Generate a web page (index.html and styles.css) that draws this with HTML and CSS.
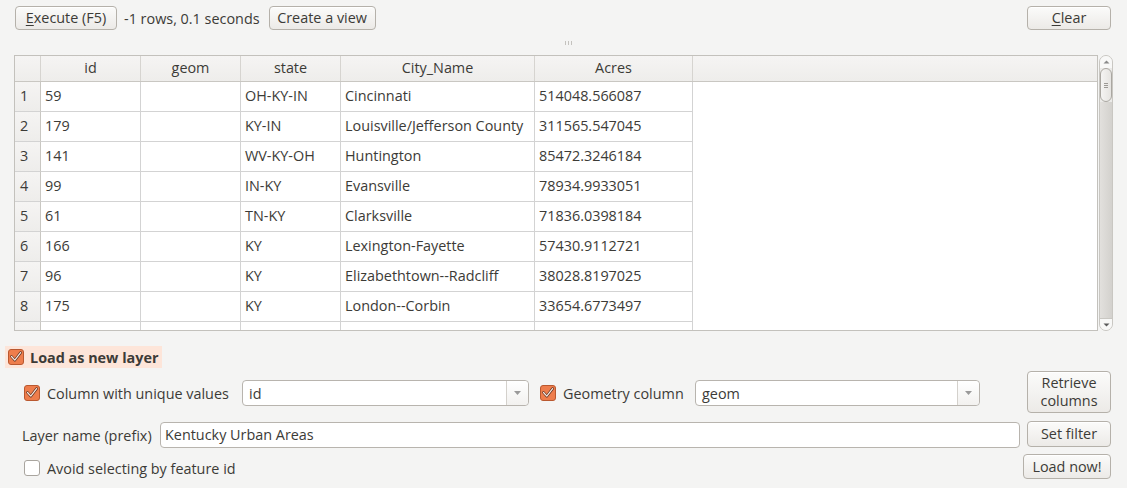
FILE: index.html
```html
<!DOCTYPE html>
<html>
<head>
<meta charset="utf-8">
<link rel="stylesheet" href="styles.css">
</head>
<body>
<div class="app">
  <div class="topbar">
    <button class="btn btn-exec"><u>E</u>xecute (F5)</button>
    <span class="status">-1 rows, 0.1 seconds</span>
    <button class="btn btn-view">Create a view</button>
    <span class="spacer"></span>
    <button class="btn btn-clear"><u>C</u>lear</button>
  </div>
  <div class="splitter"><span class="grip"></span><span class="grip"></span><span class="grip"></span></div>
  <div class="tablerow">
    <div class="tablebox">
      <div class="thead">
        <div class="c rn"></div>
        <div class="c w100">id</div>
        <div class="c w100">geom</div>
        <div class="c w100">state</div>
        <div class="c w194">City_Name</div>
        <div class="c w158">Acres</div>
        <div class="fill"></div>
      </div>
      <div class="tbody">
        <div class="tr"><div class="c rn">1</div><div class="c w100">59</div><div class="c w100"></div><div class="c w100">OH-KY-IN</div><div class="c w194">Cincinnati</div><div class="c w158">514048.566087</div></div>
        <div class="tr"><div class="c rn">2</div><div class="c w100">179</div><div class="c w100"></div><div class="c w100">KY-IN</div><div class="c w194">Louisville/Jefferson County</div><div class="c w158">311565.547045</div></div>
        <div class="tr"><div class="c rn">3</div><div class="c w100">141</div><div class="c w100"></div><div class="c w100">WV-KY-OH</div><div class="c w194">Huntington</div><div class="c w158">85472.3246184</div></div>
        <div class="tr"><div class="c rn">4</div><div class="c w100">99</div><div class="c w100"></div><div class="c w100">IN-KY</div><div class="c w194">Evansville</div><div class="c w158">78934.9933051</div></div>
        <div class="tr"><div class="c rn">5</div><div class="c w100">61</div><div class="c w100"></div><div class="c w100">TN-KY</div><div class="c w194">Clarksville</div><div class="c w158">71836.0398184</div></div>
        <div class="tr"><div class="c rn">6</div><div class="c w100">166</div><div class="c w100"></div><div class="c w100">KY</div><div class="c w194">Lexington-Fayette</div><div class="c w158">57430.9112721</div></div>
        <div class="tr"><div class="c rn">7</div><div class="c w100">96</div><div class="c w100"></div><div class="c w100">KY</div><div class="c w194">Elizabethtown--Radcliff</div><div class="c w158">38028.8197025</div></div>
        <div class="tr"><div class="c rn">8</div><div class="c w100">175</div><div class="c w100"></div><div class="c w100">KY</div><div class="c w194">London--Corbin</div><div class="c w158">33654.6773497</div></div>
        <div class="tr last"><div class="c rn"></div><div class="c w100"></div><div class="c w100"></div><div class="c w100"></div><div class="c w194"><span class="peek">Bowling Green</span></div><div class="c w158"></div></div>
      </div>
    </div>
    <div class="vscroll">
      <div class="arrow up"><svg width="7" height="4" viewBox="0 0 7 4"><path d="M0.5 3.5 L3.5 0.5 L6.5 3.5 Z" fill="#8a8a8a"/></svg></div>
      <div class="thumb"><span></span><span></span><span></span></div>
      <div class="track"></div>
      <div class="arrow down"><svg width="7" height="4" viewBox="0 0 7 4"><path d="M0.5 0.5 L6.5 0.5 L3.5 3.5 Z" fill="#5a5a5a"/></svg></div>
    </div>
  </div>

  <div class="group-head">
    <span class="chk on"><svg width="16" height="16" viewBox="0 0 16 16"><rect x="0.5" y="0.5" width="15" height="15" rx="2.5" fill="#ee7d4c" stroke="#b9582f"/><path d="M3.5 7.5 L6.8 11.2 L12.6 3.6" fill="none" stroke="#5b3222" stroke-width="2.6" stroke-linecap="round" stroke-linejoin="round"/><path d="M3.5 7.5 L6.8 11.2 L12.6 3.6" fill="none" stroke="#fbe9e1" stroke-width="1.2" stroke-linecap="round" stroke-linejoin="round"/></svg></span>
    <span class="group-title">Load as new layer</span>
  </div>

  <div class="opts">
    <div class="opts-main">
      <div class="row r1">
        <span class="chk on"><svg width="16" height="16" viewBox="0 0 16 16"><rect x="0.5" y="0.5" width="15" height="15" rx="2.5" fill="#ee7d4c" stroke="#b9582f"/><path d="M3.5 7.5 L6.8 11.2 L12.6 3.6" fill="none" stroke="#5b3222" stroke-width="2.6" stroke-linecap="round" stroke-linejoin="round"/><path d="M3.5 7.5 L6.8 11.2 L12.6 3.6" fill="none" stroke="#fbe9e1" stroke-width="1.2" stroke-linecap="round" stroke-linejoin="round"/></svg></span>
        <span class="lbl lbl-unique">Column with unique values</span>
        <div class="combo combo-id"><span class="val">id</span><span class="drop"><svg width="7" height="4" viewBox="0 0 7 4"><path d="M0 0 L7 0 L3.5 4 Z" fill="#9a9a9a"/></svg></span></div>
        <span class="chk on chk-geom"><svg width="16" height="16" viewBox="0 0 16 16"><rect x="0.5" y="0.5" width="15" height="15" rx="2.5" fill="#ee7d4c" stroke="#b9582f"/><path d="M3.5 7.5 L6.8 11.2 L12.6 3.6" fill="none" stroke="#5b3222" stroke-width="2.6" stroke-linecap="round" stroke-linejoin="round"/><path d="M3.5 7.5 L6.8 11.2 L12.6 3.6" fill="none" stroke="#fbe9e1" stroke-width="1.2" stroke-linecap="round" stroke-linejoin="round"/></svg></span>
        <span class="lbl lbl-geom">Geometry column</span>
        <div class="combo combo-geom"><span class="val">geom</span><span class="drop"><svg width="7" height="4" viewBox="0 0 7 4"><path d="M0 0 L7 0 L3.5 4 Z" fill="#9a9a9a"/></svg></span></div>
      </div>
      <div class="row r2">
        <span class="lbl lbl-name">Layer name (prefix)</span>
        <div class="input">Kentucky Urban Areas</div>
      </div>
      <div class="row r3">
        <span class="chk off"><svg width="16" height="16" viewBox="0 0 16 16"><rect x="0.5" y="0.5" width="15" height="15" rx="2.5" fill="#ffffff" stroke="#a9a59f"/></svg></span>
        <span class="lbl">Avoid selecting by feature id</span>
      </div>
    </div>
    <div class="opts-side">
      <button class="btn btn-retrieve">Retrieve<br>columns</button>
      <button class="btn btn-filter">Set filter</button>
      <button class="btn btn-load">Load now!</button>
    </div>
  </div>
</div>
</body>
</html>
```

FILE: styles.css
```css
* { box-sizing: border-box; }
html, body { margin: 0; padding: 0; }
body {
  width: 1127px;
  height: 488px;
  overflow: hidden;
  background: #f4f4f3;
  font-family: "Open Sans", "Noto Sans", "DejaVu Sans", sans-serif;
  font-size: 14.4px;
  color: #3c3b37;
}
.app { width: 1127px; }

.btn {
  font-family: inherit;
  font-size: 14.4px;
  color: #3c3b37;
  background: linear-gradient(#fbfbfa, #eceae7);
  border: 1px solid #b5b1aa;
  border-radius: 4px;
  padding: 0;
  height: 24px;
  line-height: 20px;
  box-shadow: inset 0 1px 0 #ffffff;
  white-space: nowrap;
}
.btn u { text-decoration: underline; text-underline-offset: 2px; }

.topbar {
  display: flex;
  align-items: center;
  padding: 6px 16px 0 15px;
  height: 30px;
}
.btn-exec { width: 102px; }
.status { margin-left: 7px; margin-right: 9px; white-space: nowrap; }
.btn-view { width: 107px; }
.spacer { flex: 1; }
.btn-clear { width: 84px; }

.splitter {
  height: 25px;
  display: flex;
  justify-content: center;
  align-items: center;
  gap: 1px;
  padding-left: 10px;
}
.grip { width: 1px; height: 4px; background: #c4c2be; margin: 0 0.5px; }

.tablerow {
  display: flex;
  padding-left: 14px;
  height: 276px;
}
.tablebox {
  width: 1084px;
  height: 276px;
  border: 1px solid #c3c1bc;
  background: #ffffff;
  overflow: hidden;
}
.thead {
  display: flex;
  height: 26px;
  background: linear-gradient(#f5f4f3, #eeedeb);
  border-bottom: 1px solid #c9c7c2;
}
.thead .c {
  text-align: center;
  line-height: 24px;
  border-right: 1px solid #d6d4d0;
}
.thead .fill { flex: 1; }
.tr { display: flex; height: 30px; }
.c {
  flex: none;
  height: 100%;
  border-right: 1px solid #d3d3d3;
  border-bottom: 1px solid #d3d3d3;
  padding-left: 4px;
  line-height: 28px;
  white-space: nowrap;
  overflow: hidden;
}
.thead .c { border-bottom: none; padding-left: 0; }
.rn { width: 26px; background: linear-gradient(#f5f4f3, #eeedeb); }
.tbody .rn { padding-left: 5px; border-right-color: #c9c7c2; }
.w100 { width: 100px; }
.w194 { width: 194px; }
.w158 { width: 158px; }
.peek { display: inline-block; color: #3c3b37; }

.vscroll {
  margin-left: 1px;
  width: 14px;
  height: 276px;
  border: 1px solid #c9c7c2;
  border-radius: 7px;
  background: #ebeae8;
  display: flex;
  flex-direction: column;
  align-items: center;
  overflow: hidden;
}
.arrow {
  height: 12px;
  width: 100%;
  display: flex;
  align-items: center;
  justify-content: center;
  background: #f8f8f7;
}
.arrow.down { border-top: 1px solid #c9c7c2; margin-top: auto; }
.thumb {
  width: 12px;
  height: 34px;
  border: 1px solid #aaa7a1;
  border-radius: 6px;
  background: linear-gradient(90deg, #f5f4f3, #e6e4e1);
  display: flex;
  flex-direction: column;
  align-items: center;
  justify-content: center;
  gap: 1px;
}
.thumb span { width: 4px; height: 1px; background: #9c9995; }
.track { flex: 1; width: 100%; background: linear-gradient(90deg, #e2e0dd, #d3d1cd); }

.group-head {
  margin: 15px 0 0 5px;
  width: 157px;
  height: 22px;
  background: #fde5d9;
  display: flex;
  align-items: center;
  padding-left: 3px;
}
.group-title { font-weight: bold; margin-left: 6px; color: #3c3b37; white-space: nowrap; }
.chk { display: inline-flex; width: 16px; height: 16px; flex: none; }
.chk svg { display: block; }

.opts {
  display: flex;
  padding: 4px 16px 0 22px;
}
.opts-main { flex: 1; }
.opts-side {
  width: 87px;
  display: flex;
  flex-direction: column;
  align-items: flex-end;
}
.row { display: flex; align-items: center; }
.r1 { height: 26px; margin-top: 8px; padding-left: 2px; }
.r2 { height: 26px; margin-top: 16px; }
.r3 { height: 20px; margin-top: 10px; padding-left: 2px; }
.lbl { margin-left: 7px; white-space: nowrap; }
.lbl-unique { width: 195px; flex: none; }
.lbl-geom { width: 132px; flex: none; }
.lbl-name { margin-left: 0; width: 138px; flex: none; }
.chk-geom { margin-left: 11px; }

.combo {
  height: 26px;
  background: #ffffff;
  border: 1px solid #b8b4ae;
  border-radius: 4px;
  display: flex;
  align-items: center;
  flex: none;
}
.combo-id { width: 287px; }
.combo-geom { width: 285px; }
.combo .val { flex: 1; padding-left: 6px; }
.drop {
  width: 22px;
  height: 100%;
  border-left: 1px solid #d4d1cc;
  display: flex;
  align-items: center;
  justify-content: center;
  background: linear-gradient(#ffffff, #f2f1ef);
  border-radius: 0 4px 4px 0;
}
.input {
  width: 860px;
  height: 26px;
  background: #ffffff;
  border: 1px solid #b8b4ae;
  border-radius: 4px;
  line-height: 24px;
  padding-left: 4px;
  flex: none;
}
.btn-retrieve {
  width: 84px;
  height: 42px;
  line-height: 18px;
  margin-top: -1px;
}
.btn-filter { width: 84px; height: 26px; margin-top: 8px; }
.btn-load { width: 88px; height: 25px; margin-top: 7px; }
```
